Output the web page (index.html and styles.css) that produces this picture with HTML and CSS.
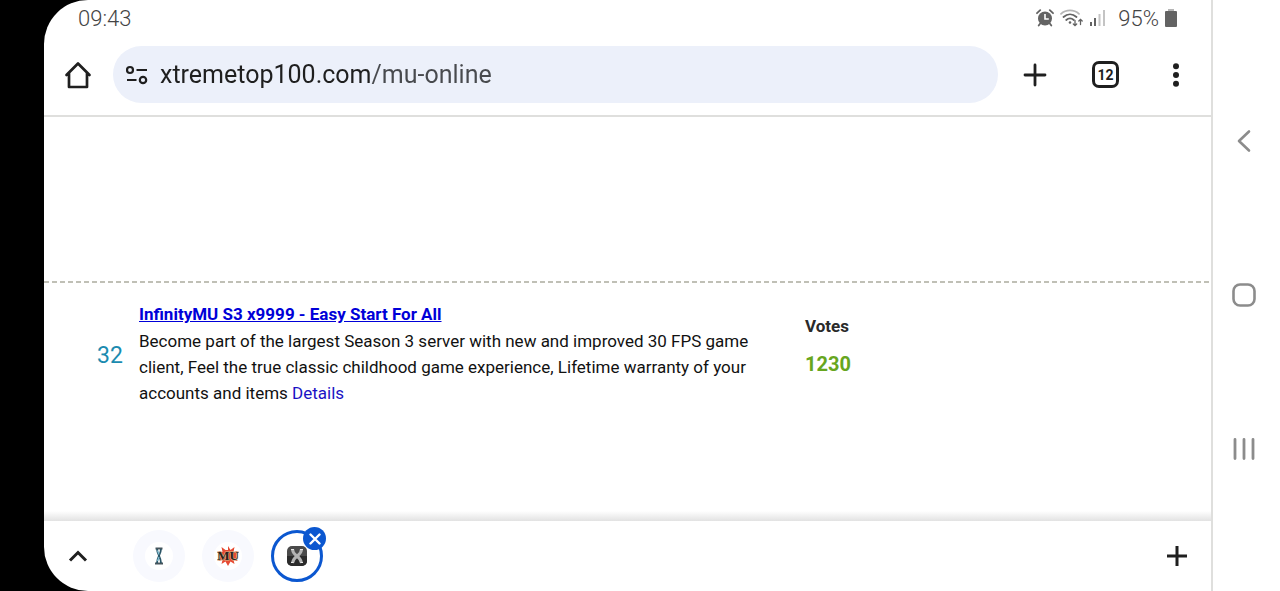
FILE: index.html
```html
<!DOCTYPE html>
<html lang="en">
<head>
  <meta charset="UTF-8" />
  <meta name="viewport" content="width=device-width, initial-scale=1" />
  <title>xtremetop100.com/mu-online</title>
  <link rel="stylesheet" href="styles.css">
</head>
<body>
  <div class="screen">
    <div class="status-bar">
      <span class="clock">09:43</span>
      <div class="status-icons">
        <svg width="18" height="18" viewBox="0 0 18 18" fill="none" stroke="#636363">
          <circle cx="9" cy="9.500" r="7" fill="#636363" stroke="none" />
          <path stroke-width="1.800" stroke-linecap="round" d="M1 4.200L4.200 1.200M17 4.200L13.800 1.200M4.200 14.500l-1.500 2M13.800 14.500l1.500 2" />
          <path stroke="#fff" stroke-width="1.600" d="M9 5v5h3.800" />
        </svg>
        <svg width="24" height="18" viewBox="0 0 24 18" fill="none" stroke="#636363" stroke-width="1.800" stroke-linecap="round">
          <path stroke="#b5b5b5" d="M1 4.800C6 .2 14 .2 19 4.800" />
          <path d="M3.500 8C7.500 4.500 12.500 4.500 16.500 8M6.200 11c2.500-2.200 5.100-2.200 7.600 0" />
          <circle cx="10" cy="13.500" r="1.300" fill="#636363" stroke="none" />
          <path stroke-width="1.300" d="M15 11.500v5M13.300 15l1.700 1.700 1.700-1.700M20.500 15.500v-5M18.800 12l1.700-1.700 1.700 1.700" />
        </svg>
        <svg width="16" height="18" viewBox="0 0 16 18">
          <path fill="#636363" d="M0 13h2v4H0zM4 9h2v8H4z" />
          <path fill="#c4c4c4" d="M8.500 5h2v12h-2zM13 1h2v16h-2z" />
        </svg>
        <span class="battery-level">95%</span>
        <svg width="12" height="18" viewBox="0 0 12 18">
          <path fill="#b5b5b5" d="M3 0h6v2.500H3z" />
          <rect y="2" width="12" height="16" rx="1" fill="#636363" />
        </svg>
      </div>
    </div>

    <div class="toolbar">
      <button class="icon-button" aria-label="Home">
        <svg width="28" height="28" viewBox="0 0 28 28" fill="none" stroke="#1f1f1f" stroke-width="2.700" stroke-linejoin="round" stroke-linecap="round">
          <path d="M2.500 14L14 2.500 25.500 14M5 12v14h18V12" />
        </svg>
      </button>

      <div class="address-bar">
        <svg width="24" height="20" viewBox="0 0 24 20" fill="none" stroke="#1f1f1f" stroke-width="2.200">
          <circle cx="5" cy="5" r="3" />
          <path d="M11.500 5H22M2 15h9.500" />
          <circle cx="18" cy="15" r="3.200" />
        </svg>
        <input type="text" class="url" aria-label="Address" value="xtremetop100.com/mu-online">
      </div>

      <div class="actions">
        <button class="icon-button" aria-label="New tab">
          <svg width="24" height="24" viewBox="0 0 24 24" stroke="#1f1f1f" stroke-width="2.800" stroke-linecap="round">
            <path d="M12 2v20M2 12h20" />
          </svg>
        </button>
        <button class="tab-count" aria-label="Open tabs">12</button>
        <button class="icon-button" aria-label="Menu">
          <svg width="24" height="24" viewBox="0 0 24 24" fill="#1f1f1f">
            <circle cx="12" cy="3.200" r="3" />
            <circle cx="12" cy="12" r="3" />
            <circle cx="12" cy="20.800" r="3" />
          </svg>
        </button>
      </div>
    </div>

    <main class="page">
      <div class="ad-space"></div>
      <div class="server">
        <div class="rank">32</div>
        <div class="info">
          <a class="title" href="#">InfinityMU S3 x9999 - Easy Start For All</a>
          <p>Become part of the largest Season 3 server with new and improved 30 FPS game client, Feel the true classic childhood game experience, Lifetime warranty of your accounts and items <a class="details" href="#">Details</a></p>
        </div>
        <div class="votes">
          <div class="votes-label">Votes</div>
          <div class="votes-count">1230</div>
        </div>
      </div>
    </main>

    <div class="tab-strip">
      <button class="icon-button" aria-label="Expand tabs">
        <svg width="20" height="14" viewBox="0 0 20 14" fill="none" stroke="#1f1f1f" stroke-width="3">
          <path d="M2 11.500L10 3.500l8 8" />
        </svg>
      </button>

      <div class="tabs">
        <button class="tab" aria-label="Tab 1">
          <span class="favicon">
            <svg width="10" height="18" viewBox="0 0 10 18" fill="none">
              <path stroke="#46555c" stroke-width="2" d="M1.500 1.500h7M1 16.500h8" />
              <path stroke="#2b5566" stroke-width="1.800" d="M3 2c0 5 4 8 4 14M7 2c0 5-4 8-4 14" />
              <path stroke="#7fc0d6" stroke-width="1.200" d="M3.500 3.500l1.500 4M3.500 14l1.500-4" />
            </svg>
          </span>
        </button>
        <button class="tab" aria-label="Tab 2">
          <span class="favicon">
            <svg width="22" height="22" viewBox="0 0 22 22">
              <path fill="#e64a32" d="M11 5V1l2.500 4 4-3-1 5 4-1-1.500 5 1.500 5-4-1 1 4-4-2.500L11 21l-2.500-4.500-4 2.500 1-4-4 1L3 11 1.500 6l4 1-1-5 4 3z" />
              <text class="logo-text" x="11" y="15" text-anchor="middle">MU</text>
            </svg>
          </span>
        </button>
        <button class="tab active" aria-label="Close tab 3">
          <span class="favicon">
            <svg width="22" height="22" viewBox="0 0 22 22" fill="none">
              <rect x="1" y="1" width="20" height="20" rx="5" fill="#4a4a4a" />
              <path fill="#2b2b2b" d="M1 11h20v5a5 5 0 0 1-5 5H6a5 5 0 0 1-5-5z" />
              <path stroke="#b4b4b4" stroke-width="3" d="M6.500 4c0 4 2 5 4.500 7s4 4 4.500 7M15.500 4c0 4-2 5-4.500 7s-4 4-4.500 7" />
              <path stroke="#e6e6e6" stroke-width="1.200" d="M5 4.500h3M14 4.500h3M5 17.500h2.500M14.500 17.500H17" />
            </svg>
          </span>
          <span class="close">
            <svg width="12" height="12" viewBox="0 0 12 12" stroke="#fff" stroke-width="2.400" stroke-linecap="round">
              <path d="M1.500 1.500l9 9M10.500 1.500l-9 9" />
            </svg>
          </span>
        </button>
      </div>

      <button class="icon-button" aria-label="Add tab">
        <svg width="22" height="22" viewBox="0 0 22 22" stroke="#1f1f1f" stroke-width="3">
          <path d="M11 1v20M1 11h20" />
        </svg>
      </button>
    </div>
  </div>

  <nav class="system-nav">
    <button class="icon-button" aria-label="Back">
      <svg width="24" height="24" viewBox="0 0 24 24" fill="none" stroke="#8c8c8c" stroke-width="2.600" stroke-linecap="round" stroke-linejoin="round">
        <path d="M17 2.500L7 12l10 9.500" />
      </svg>
    </button>
    <button class="icon-button" aria-label="Home screen">
      <svg width="24" height="24" viewBox="0 0 24 24" fill="none" stroke="#8c8c8c" stroke-width="2.600">
        <rect x="1.500" y="1.500" width="21" height="21" rx="6.500" />
      </svg>
    </button>
    <button class="icon-button" aria-label="Recent apps">
      <svg width="24" height="24" viewBox="0 0 24 24" stroke="#8c8c8c" stroke-width="2.800" stroke-linecap="round">
        <path d="M3 2.500v19M12 2.500v19M21 2.500v19" />
      </svg>
    </button>
  </nav>
</body>
</html>
```

FILE: styles.css
```css
:root {
  --text: #1f1f1f;
  --border: #dfdfdd;
  --blue: #0b57d0;
  --field: #ecf0fa;
}

* {
  margin: 0;
  padding: 0;
  box-sizing: border-box;
}

body {
  font-family: Roboto, sans-serif;
  background: linear-gradient(to right, #000 50%, #fff 50%);
  color: var(--text);
  min-height: 100vh;
  display: flex;
  padding-left: 44px;
}

button {
  background: none;
  border: none;
  font-family: inherit;
  cursor: pointer;
}

svg {
  display: block;
  flex-shrink: 0;
}

.screen {
  flex: 1;
  min-width: 0;
  display: flex;
  flex-direction: column;
  background: #fff;
  border-right: 2px solid var(--border);
  border-radius: 44px 0 0 44px;
  overflow: hidden;
}

.icon-button {
  display: flex;
  align-items: center;
  justify-content: center;
}

/* Status bar */
.status-bar {
  display: flex;
  justify-content: space-between;
  align-items: center;
  height: 36px;
  padding: 0 34px;
  font-size: 22px;
  font-weight: 300;
  color: #444;
}

.status-icons {
  display: flex;
  align-items: center;
  gap: 6px;
}

.battery-level {
  margin-left: 6px;
}

/* Browser toolbar */
.toolbar {
  display: flex;
  align-items: center;
  gap: 21px;
  padding: 10px 23px 12px 20px;
  border-bottom: 2px solid var(--border);
}

.address-bar {
  flex: 1;
  display: flex;
  align-items: center;
  gap: 11px;
  height: 57px;
  padding: 0 12px;
  background: var(--field);
  border-radius: 29px;
}

/* domain is darker than the path */
.url {
  flex: 1;
  min-width: 0;
  border: none;
  outline: none;
  font-family: inherit;
  font-size: 25px;
  line-height: 32px;
  background: linear-gradient(to right, #1f1f1f 212px, #484a4e 212px);
  -webkit-background-clip: text;
  background-clip: text;
  color: transparent;
}

.actions {
  display: flex;
  align-items: center;
  gap: 45px;
  margin-left: 4px;
}

.tab-count {
  width: 27px;
  height: 27px;
  border: 3px solid var(--text);
  border-radius: 7px;
  font-size: 14px;
  font-weight: 700;
  color: var(--text);
}

/* Page */
.page {
  flex: 1;
  background: linear-gradient(to top, #e2e2e2, #fff 10px);
}

.ad-space {
  height: 164px;
}

.server {
  display: flex;
  padding: 20px 0 0 53px;
  background: repeating-linear-gradient(to right, #c0c0b6 0 5px, transparent 5px 8px) top left / 100% 2px no-repeat;
}

.rank {
  flex-shrink: 0;
  width: 42px;
  padding-top: 40px;
  font-size: 23px;
  line-height: 30px;
  color: #1b8bb0;
}

.info {
  width: 630px;
  font-size: 17px;
  line-height: 26px;
  color: #111;
}

.info p {
  margin-top: 1px;
}

.title {
  font-weight: 700;
  color: #0000d8;
}

.details {
  color: #1a12c4;
  text-decoration: none;
}

.votes {
  padding: 12px 0 0 36px;
  font-weight: 700;
}

.votes-label {
  font-size: 17px;
  line-height: 26px;
  color: #2a2a2a;
}

.votes-count {
  margin-top: 11px;
  font-size: 20px;
  line-height: 28px;
  color: #67a61e;
}

/* Bottom tab strip */
.tab-strip {
  display: flex;
  align-items: center;
  height: 70px;
  padding: 0 23px 0 24px;
}

.tabs {
  flex: 1;
  display: flex;
  gap: 17px;
  margin-left: 45px;
}

.tab {
  position: relative;
  display: flex;
  align-items: center;
  justify-content: center;
  width: 52px;
  height: 52px;
  border-radius: 50%;
  background: #f8f9fe;
}

.favicon {
  display: flex;
  align-items: center;
  justify-content: center;
  width: 28px;
  height: 28px;
  border-radius: 50%;
  background: #fff;
}

.logo-text {
  font-family: "Liberation Serif", serif;
  font-size: 13px;
  font-weight: 700;
  fill: #2a211c;
  stroke: #d8b98c;
  stroke-width: 1px;
  paint-order: stroke;
}

.tab.active {
  border: 3px solid var(--blue);
  background: #fff;
}

.close {
  position: absolute;
  top: -6px;
  right: -6px;
  display: flex;
  align-items: center;
  justify-content: center;
  width: 23px;
  height: 23px;
  border-radius: 50%;
  background: var(--blue);
}

/* Android navigation */
.system-nav {
  width: 67px;
  display: flex;
  flex-direction: column;
  align-items: center;
  justify-content: center;
  gap: 130px;
  padding: 0 5px 1px 0;
  background: #fff;
}
```
